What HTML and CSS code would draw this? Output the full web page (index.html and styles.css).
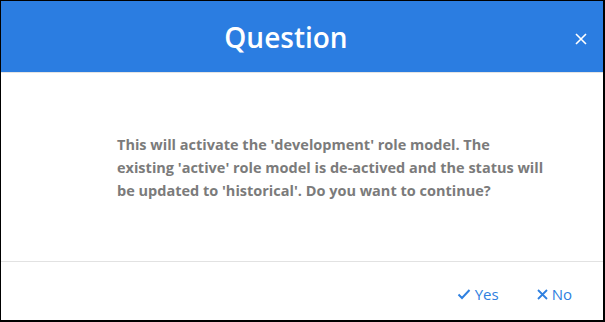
FILE: index.html
```html
<!DOCTYPE html>
<html lang="en">
<head>
  <meta charset="UTF-8" />
  <title>Question</title>
  <link rel="stylesheet" href="styles.css">
</head>
<body>

<div class="dialog">
  <div class="dialog-header">
    <h2 class="dialog-title">Question</h2>
    <button class="dialog-close" title="Close">
      <svg width="12" height="12" viewBox="0 0 12 12"><path d="M1 1L11 11M11 1L1 11" stroke="#fff" stroke-width="1.6" fill="none"/></svg>
    </button>
  </div>

  <div class="dialog-body">
    <p>This will activate the 'development' role model. The existing 'active' role model is de-actived and the status will be updated to 'historical'. Do you want to continue?</p>
  </div>

  <div class="dialog-footer">
    <button class="btn-link">
      <svg width="14" height="12" viewBox="0 0 14 12"><path d="M1.5 6.5L5 10L12.5 2" stroke="currentColor" stroke-width="2" fill="none"/></svg>
      Yes
    </button>
    <button class="btn-link">
      <svg width="11" height="11" viewBox="0 0 11 11"><path d="M1 1L10 10M10 1L1 10" stroke="currentColor" stroke-width="1.8" fill="none"/></svg>
      No
    </button>
  </div>
</div>

</body>
</html>
```

FILE: styles.css
```css
html, body {
  margin: 0;
  height: 100%;
}
body {
  font-family: "Open Sans", "Noto Sans", Arial, sans-serif;
  background: #fff;
}
.dialog {
  box-sizing: border-box;
  height: 322px;
  border: 1px solid #000;
  border-right-width: 2px;
  border-bottom-width: 2px;
  display: flex;
  flex-direction: column;
}
.dialog-header {
  height: 71px;
  background: #2b7de1;
  display: flex;
  align-items: center;
  border-bottom: 1px solid #e4e4e4;
}
.dialog-title {
  flex: 1;
  margin: 0;
  text-align: center;
  color: #fff;
  font-size: 28px;
  font-weight: 600;
}
.dialog-close {
  width: 28px;
  height: 40px;
  margin-right: 4px;
  margin-top: 8px;
  background: none;
  border: none;
  cursor: pointer;
  padding: 0 0 0 4px;
  text-align: left;
}
.dialog-body {
  flex: 1;
  display: flex;
  align-items: center;
  padding: 0 55px 0 116px;
}
.dialog-body p {
  margin: 0;
  color: #7b7b7b;
  font-size: 14.5px;
  font-weight: 700;
  line-height: 23px;
}
.dialog-footer {
  height: 59px;
  border-top: 1px solid #e2e2e2;
  display: flex;
  justify-content: flex-end;
  align-items: center;
  padding: 6px 31px 0 0;
  box-sizing: border-box;
  gap: 38px;
}
.btn-link {
  background: none;
  border: none;
  padding: 0;
  color: #2f80e0;
  font-family: inherit;
  font-size: 15px;
  display: flex;
  align-items: center;
  gap: 4px;
  cursor: pointer;
}
```
